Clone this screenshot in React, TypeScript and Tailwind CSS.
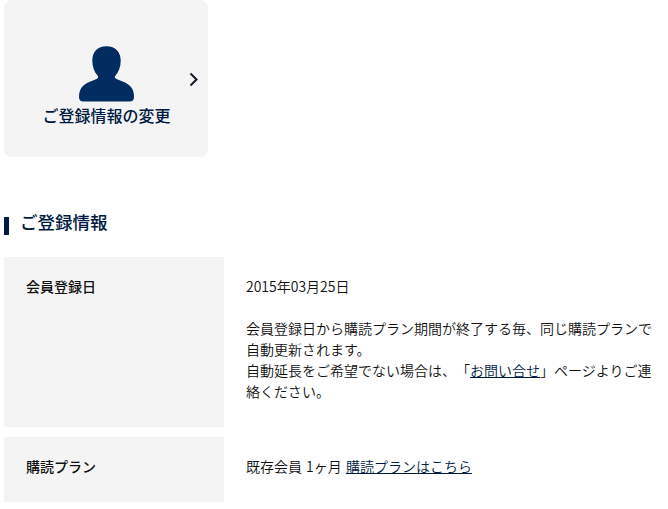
import React from 'react';

type InfoRowProps = {
  label: string;
  children: React.ReactNode;
};

const InfoRow: React.FC<InfoRowProps> = ({ label, children }) => {
  return (
    <div className="flex">
      <dt className="w-[220px] shrink-0 bg-[#f4f4f4] pl-[22px] pt-[19px] pb-[25px] font-medium">{label}</dt>
      <dd className="w-[434px] shrink-0 pl-[22px] pt-[19px] pb-[25px] font-[350] [word-spacing:1px]">{children}</dd>
    </div>
  );
};

const TextLink: React.FC<{ children: React.ReactNode }> = ({ children }) => (
  <a href="#" className="text-[#001a43] underline underline-offset-[1px] decoration-1">
    {children}
  </a>
);

const App: React.FC = () => {
  return (
    <main className="h-[509px] overflow-hidden bg-white pl-1 font-['Noto_Sans_CJK_JP',sans-serif] text-[14px] leading-[21px] text-[#111] [text-spacing-trim:space-all]">
      {/* Menu card */}
      <a href="#" className="flex h-[157px] w-[204px] items-center rounded-lg bg-[#f4f4f4] text-[#001a43]">
        <div className="flex flex-1 flex-col items-center pl-[21px] pt-[16px]">
          <svg className="h-[56px] w-[56px] overflow-visible" viewBox="0 0 56 56" fill="#002c5f">
            <path d="M27.500 -.7C18.500-.7 13.300 5 13.300 13.500c0 6 1.900 11.500 5.400 15.300 1 1.200.5 2.400-1.200 3.200L9 35.500C3 38.500 0 42.500 0 50c0 3 1.500 4.500 4.500 4.500h46c3 0 4.500-1.500 4.500-4.500 0-7.500-3-11.500-9-14.500L37.500 32c-1.700-.8-2.200-2-1.200-3.200 3.500-3.800 5.400-9.300 5.400-15.300C41.700 5 36.500-.7 27.500-.7z" />
          </svg>
          <span className="whitespace-nowrap text-[16px] leading-6 font-medium">ご登録情報の変更</span>
        </div>
        <svg className="mr-[8px] h-[16px] w-[12px]" viewBox="0 0 12 16" fill="none" stroke="#111827" strokeWidth="2">
          <path d="M2.500 2.500l6 6-6 6" />
        </svg>
      </a>

      {/* Registration info */}
      <h2 className="mt-[52px] flex h-[26px] items-center text-[17.5px] leading-[26px] font-medium text-[#001a43]">
        <span className="mt-[8px] mr-[11px] h-[18px] w-[5px] bg-[#001a43]" />
        ご登録情報
      </h2>
      <dl className="mt-[22px] flex flex-col gap-[10px]">
        <InfoRow label="会員登録日">
          <p>2015年03月25日</p>
          <p className="mt-[21px]">会員登録日から購読プラン期間が終了する毎、同じ購読プランで自動更新されます。</p>
          <p>
            自動延長をご希望でない場合は、「<TextLink>お問い合せ</TextLink>」ページよりご連絡ください。
          </p>
        </InfoRow>
        <InfoRow label="購読プラン">
          <p>
            既存会員 1ヶ月 <TextLink>購読プランはこちら</TextLink>
          </p>
        </InfoRow>
      </dl>
    </main>
  );
};

export default App;
